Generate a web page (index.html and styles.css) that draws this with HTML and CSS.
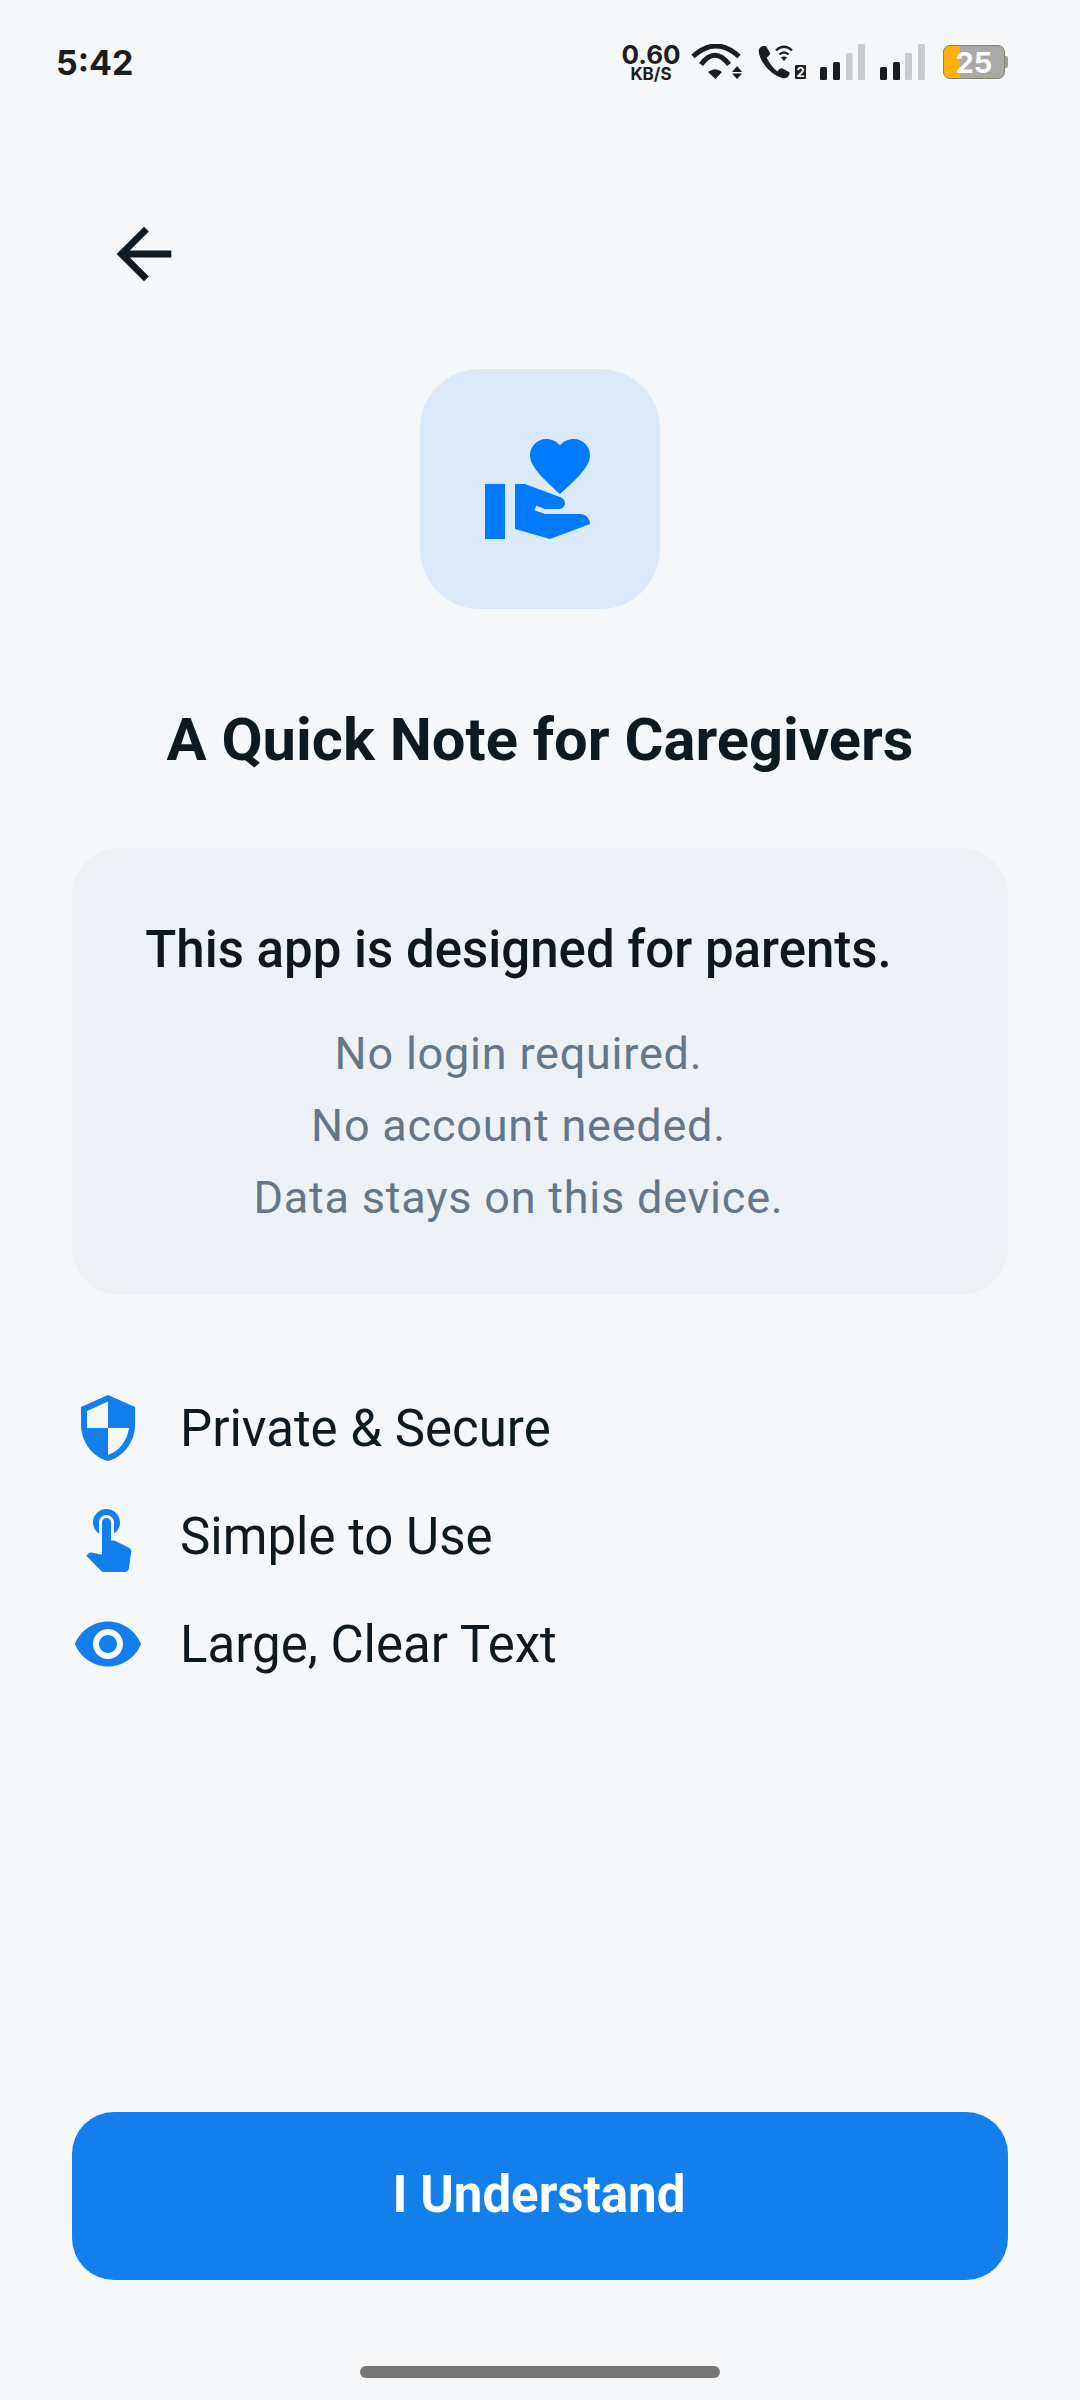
FILE: index.html
```html
<!DOCTYPE html>
<html lang="en">
<head>
    <meta charset="UTF-8">
    <meta name="viewport" content="width=device-width, initial-scale=1.0">
    <title>A Quick Note for Caregivers</title>
    <link rel="stylesheet" href="styles.css">
</head>
<body>
    <div class="screen">
        <div class="status-bar">
            <span class="time">5:42</span>
            <div class="status-icons">
                <div class="speed">
                    <span class="speed-value">0.60</span>
                    <span class="speed-unit">KB/S</span>
                </div>
                <svg class="wifi" width="52" height="36" viewBox="0 0 52 36">
                    <path d="M2 12.500Q25 -8.500 48 12.500" fill="none" stroke="#1b1d20" stroke-width="5"/>
                    <path d="M10 20.500Q24 2 38 20.500" fill="none" stroke="#1b1d20" stroke-width="5"/>
                    <path d="M17 28Q24.500 22.500 31 28L24.500 35z" fill="#1b1d20"/>
                    <path d="M41 28l5-6 5 6zM41 29.500l5 5.500 5-5.500z" fill="#1b1d20"/>
                </svg>
                <svg class="call" width="48" height="36" viewBox="0 0 48 36">
                    <path d="M5 2C1.500 3 0 6 1 9.500c2.500 10.500 12 21 23 24.500 4 1 6.500-1 7.500-3.800.3-1 0-2-1-2.500l-6-3.200c-1-.5-2-.4-2.800.4l-2.400 2.400C15 24 10.500 18 8.800 13.500l2.500-2.300c.8-.8 1-1.800.6-2.800L8.500 3C8 2 6.300 1.700 5 2z" fill="#1b1d20"/>
                    <path d="M18 6.500Q26 -1 34 6.500M21.500 10.500Q26 6 30.500 10.500" fill="none" stroke="#1b1d20" stroke-width="2.200"/>
                    <path d="M23 13.500Q26 11.500 29 13.500L26 17z" fill="#1b1d20"/>
                    <rect x="37" y="21" width="11" height="14" rx="1" fill="#1b1d20"/>
                    <text class="sim-num" x="42.500" y="32.500">2</text>
                </svg>
                <svg class="signal" width="45" height="36" viewBox="0 0 45 36">
                    <rect x="0" y="23" width="7" height="13" rx="1.500" fill="#1b1d20"/>
                    <rect x="13" y="18" width="7" height="18" rx="1.500" fill="#1b1d20"/>
                    <rect x="26" y="9" width="6.500" height="27" rx="1.500" fill="#c9cbce"/>
                    <rect x="38" y="0" width="7" height="36" rx="1.500" fill="#c9cbce"/>
                </svg>
                <svg class="signal" width="45" height="36" viewBox="0 0 45 36">
                    <rect x="0" y="23" width="7" height="13" rx="1.500" fill="#1b1d20"/>
                    <rect x="13" y="18" width="7" height="18" rx="1.500" fill="#1b1d20"/>
                    <rect x="25" y="9" width="7" height="27" rx="1.500" fill="#c9cbce"/>
                    <rect x="38" y="0" width="7" height="36" rx="1.500" fill="#c9cbce"/>
                </svg>
                <div class="battery">
                    <span class="battery-level">25</span>
                </div>
            </div>
        </div>

        <div class="back">
            <svg width="82" height="82" viewBox="0 0 24 24"><path d="M20 11H7.830l5.590-5.590L12 4l-8 8 8 8 1.410-1.410L7.830 13H20v-2z" fill="#0f1a23"/></svg>
        </div>

        <div class="tile">
            <svg width="120" height="120" viewBox="0 0 24 24"><path d="M1 11h4v11H1zm15-7.750C16.650 2.490 17.660 2 18.700 2 20.550 2 22 3.450 22 5.300c0 2.270-2.910 4.900-6 7.700-3.090-2.810-6-5.440-6-7.700C10 3.450 11.450 2 13.300 2c1.040 0 2.050.49 2.700 1.250zM20 17h-7l-2.090-.73.33-.94L13 16h2.820c.65 0 1.180-.53 1.180-1.180 0-.49-.31-.93-.77-1.110L8.970 11H7v9.020L14 22l8.010-3c-.01-1.100-.9-2-2.010-2z" fill="#007aff"/></svg>
        </div>

        <h1 class="title">A Quick Note for Caregivers</h1>

        <div class="card">
            <p class="card-head">This app is designed for parents.</p>
            <p class="card-line">No login required.</p>
            <p class="card-line">No account needed.</p>
            <p class="card-line">Data stays on this device.</p>
        </div>

        <div class="features">
            <div class="feature">
                <svg width="72" height="72" viewBox="0 0 24 24"><path d="M12 1L3 5v6c0 5.550 3.840 10.740 9 12 5.160-1.260 9-6.450 9-12V5l-9-4zm0 10.990h7c-.53 4.120-3.280 7.790-7 9.010V12H5V6.300l7-3.110v8.800z" fill="#137fec"/></svg>
                <span>Private &amp; Secure</span>
            </div>
            <div class="feature">
                <svg width="72" height="72" viewBox="0 0 24 24"><path d="M9 11.240V7.500C9 6.120 10.120 5 11.500 5S14 6.120 14 7.500v3.740c1.210-.81 2-2.180 2-3.740C16 5.010 13.990 3 11.500 3S7 5.010 7 7.500c0 1.560.79 2.930 2 3.740zm9.840 4.630l-4.540-2.260c-.17-.07-.35-.11-.54-.11H13v-6c0-.83-.67-1.500-1.500-1.500S10 6.670 10 7.500v10.740l-3.430-.72c-.08-.01-.15-.03-.24-.03-.31 0-.59.13-.79.33l-.79.8 4.940 4.940c.27.27.65.44 1.060.44h6.790c.75 0 1.330-.55 1.440-1.280l.75-5.270c.01-.07.02-.14.02-.2 0-.62-.38-1.160-.91-1.380z" fill="#137fec"/></svg>
                <span>Simple to Use</span>
            </div>
            <div class="feature">
                <svg width="72" height="72" viewBox="0 0 24 24"><path d="M12 4.500C7 4.500 2.730 7.610 1 12c1.730 4.390 6 7.500 11 7.500s9.270-3.110 11-7.500c-1.730-4.390-6-7.500-11-7.500zM12 17c-2.760 0-5-2.240-5-5s2.240-5 5-5 5 2.240 5 5-2.240 5-5 5zm0-8c-1.660 0-3 1.340-3 3s1.340 3 3 3 3-1.340 3-3-1.340-3-3-3z" fill="#137fec"/></svg>
                <span>Large, Clear Text</span>
            </div>
        </div>

        <button class="understand">I Understand</button>

        <div class="home-bar"></div>
    </div>
</body>
</html>
```

FILE: styles.css
```css
* {
    box-sizing: border-box;
}
body {
    margin: 0;
    font-family: Roboto, sans-serif;
    background-color: #f5f7f9;
}
p, h1 {
    margin: 0;
}
.screen {
    width: 1080px;
    height: 2400px;
    display: flex;
    flex-direction: column;
    overflow: hidden;
}
.status-bar {
    height: 124px;
    padding: 0 72px 0 56px;
    display: flex;
    align-items: center;
    justify-content: space-between;
    color: #1b1d20;
    font-family: Inter, sans-serif;
}
.time {
    font-size: 34px;
    font-weight: 700;
}
.status-icons {
    display: flex;
    align-items: center;
}
.speed {
    width: 70px;
    display: flex;
    flex-direction: column;
    align-items: center;
    font-weight: 700;
}
.speed-value {
    font-size: 26px;
    line-height: 24px;
}
.speed-unit {
    font-size: 17px;
    line-height: 16px;
    margin-top: -1px;
}
.wifi {
    margin-left: 5px;
}
.call {
    margin-left: 15px;
}
.sim-num {
    font-size: 13px;
    font-weight: 700;
    fill: #ffffff;
    text-anchor: middle;
}
.signal {
    margin-left: 14px;
}
.signal + .signal {
    margin-left: 15px;
}
.battery {
    position: relative;
    width: 62px;
    height: 34px;
    margin: 0 3px 0 18px;
    border: 1px solid #86836f;
    border-radius: 7px;
    background: linear-gradient(90deg, #ffb000 26%, #a9a9a9 26%);
    display: flex;
    align-items: center;
    justify-content: center;
    color: #ffffff;
    font-size: 29px;
    font-weight: 700;
}
.battery::after {
    content: "";
    position: absolute;
    right: -4px;
    top: 10px;
    width: 3px;
    height: 12px;
    border-radius: 0 2px 2px 0;
    background-color: #a0a0a0;
}
.back {
    margin: 89px 0 0 103px;
    height: 82px;
}
.tile {
    width: 240px;
    height: 240px;
    margin: 74px auto 0;
    border-radius: 60px;
    background-color: #dbe9f9;
    display: flex;
    align-items: center;
    justify-content: center;
}
.title {
    margin-top: 91px;
    text-align: center;
    font-size: 59.700px;
    line-height: 80px;
    font-weight: 700;
    color: #0e1a20;
}
.card {
    width: 936px;
    height: 447px;
    margin: 68px 0 0 72px;
    padding: 67px 43px 0 0;
    border-radius: 48px;
    background-color: #eef1f6;
    text-align: center;
}
.card-head {
    font-size: 51px;
    line-height: 70px;
    font-weight: 500;
    color: #0d171d;
    margin-bottom: 33px;
}
.card-line {
    font-size: 45px;
    line-height: 72px;
    letter-spacing: 0.780px;
    color: #65768a;
}
.features {
    margin: 97px 0 0 72px;
    display: flex;
    flex-direction: column;
    gap: 36px;
}
.feature {
    display: flex;
    align-items: center;
    gap: 36px;
    font-size: 51px;
    color: #0e1a20;
}
.understand {
    width: 936px;
    height: 168px;
    margin: auto 0 0 72px;
    padding: 0 2px 3px 0;
    border: none;
    border-radius: 42px;
    background-color: #137fec;
    color: #ffffff;
    font-family: Roboto, sans-serif;
    font-size: 51px;
    font-weight: 700;
}
.home-bar {
    width: 360px;
    height: 12px;
    margin: 86px auto 22px;
    border-radius: 6px;
    background-color: #777777;
}
```
